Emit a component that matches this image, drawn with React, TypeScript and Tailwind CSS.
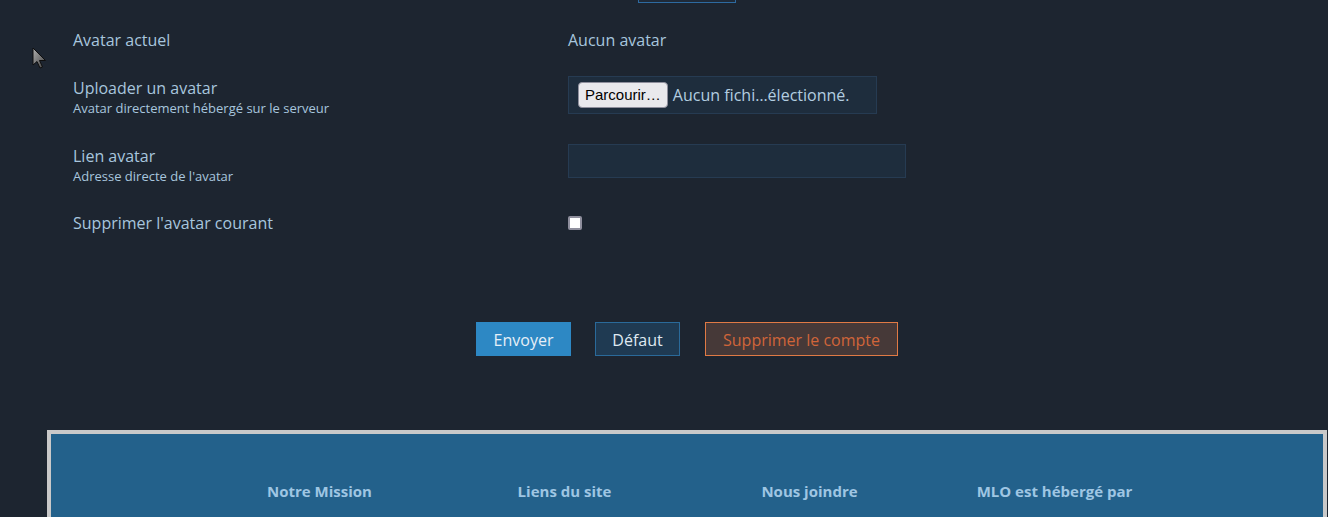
import React from 'react';

const rows = [
  { label: 'Uploader un avatar', hint: 'Avatar directement hébergé sur le serveur' },
  { label: 'Lien avatar', hint: "Adresse directe de l'avatar" },
];

const footerCols = ['Notre Mission', 'Liens du site', 'Nous joindre', 'MLO est hébergé par'];

const Cursor: React.FC = () => (
  <svg className="absolute left-[32px] top-[47px]" width="16" height="23" viewBox="0 0 16 23">
    <defs>
      <linearGradient id="cg" x1="0" y1="0" x2="1" y2="1">
        <stop offset="0" stopColor="#b0b0b0" />
        <stop offset="1" stopColor="#404040" />
      </linearGradient>
    </defs>
    <path d="M1 1 L1 18 L5 14.5 L8 21 L10.5 20 L7.5 13.5 L13.5 13.5 Z" fill="url(#cg)" stroke="#0e0e0e" strokeWidth="1" strokeLinejoin="round" />
  </svg>
);

export default function App() {
  return (
    <div className="relative h-[517px] bg-[#1d2530] font-['Open_Sans',sans-serif] text-[#a8c6de] overflow-hidden">
      <Cursor />

      <div className="ml-[638px] w-[98px] h-[3px] border-x border-b border-[#2d6aa0] bg-[#1f2a38]" />

      <div className="pl-[73px]">
        <div className="flex mt-[25px] h-6 items-center">
          <div className="w-[495px] text-base leading-6">Avatar actuel</div>
          <div className="text-base leading-6">Aucun avatar</div>
        </div>

        <div className="flex mt-[24px]">
          <div className="w-[495px]">
            <div className="text-base leading-6">{rows[0].label}</div>
            <div className="text-[13px] leading-4">{rows[0].hint}</div>
          </div>
          <div className="w-[309px] h-[38px] bg-[#1e2d3d] border border-[#263b52] flex items-center pl-[9px] gap-[5px]">
            <span className="h-[26px] px-[6px] flex items-center rounded-[4px] bg-[#e9e9ed] border border-[#8f8f9d] text-[15px] text-black font-['Liberation_Sans',sans-serif]">
              Parcourir…
            </span>
            <span className="text-base text-[#b3cde0]">Aucun fichi…électionné.</span>
          </div>
        </div>

        <div className="flex mt-[28px]">
          <div className="w-[495px]">
            <div className="text-base leading-6">{rows[1].label}</div>
            <div className="text-[13px] leading-4">{rows[1].hint}</div>
          </div>
          <div className="w-[338px] h-[34px] bg-[#1e2d3d] border border-[#263b52]" />
        </div>

        <div className="flex mt-[27px] h-6 items-center">
          <div className="w-[495px] text-base leading-6">Supprimer l'avatar courant</div>
          <span className="w-[14px] h-[14px] bg-white border-2 border-[#8f8f9d] rounded-[2px]" />
        </div>
      </div>

      <div className="flex pl-[476px] mt-[87px] gap-[24px]">
        <button className="w-[95px] h-[34px] pt-px bg-[#2d88c4] text-[#e6eff7] text-base">Envoyer</button>
        <button className="w-[85px] h-[34px] pt-px bg-[#1f3a52] border border-[#2a6a9a] text-[#dfe9f1] text-base">Défaut</button>
        <button className="ml-px w-[193px] h-[34px] pt-px bg-[#463938] border border-[#e07a45] text-[#d0653a] text-base">Supprimer le compte</button>
      </div>

      <footer className="ml-[47px] mt-[74px] w-[1280px] h-[87px] border-4 border-b-0 border-[#c9c9c9] bg-[#23618b]">
        <div className="grid grid-cols-4 px-[146px] pt-[47px]">
          {footerCols.map((c) => (
            <h3 key={c} className="text-center text-[15px] leading-5 font-bold text-[#9fc6e3]">{c}</h3>
          ))}
        </div>
      </footer>
    </div>
  );
}
